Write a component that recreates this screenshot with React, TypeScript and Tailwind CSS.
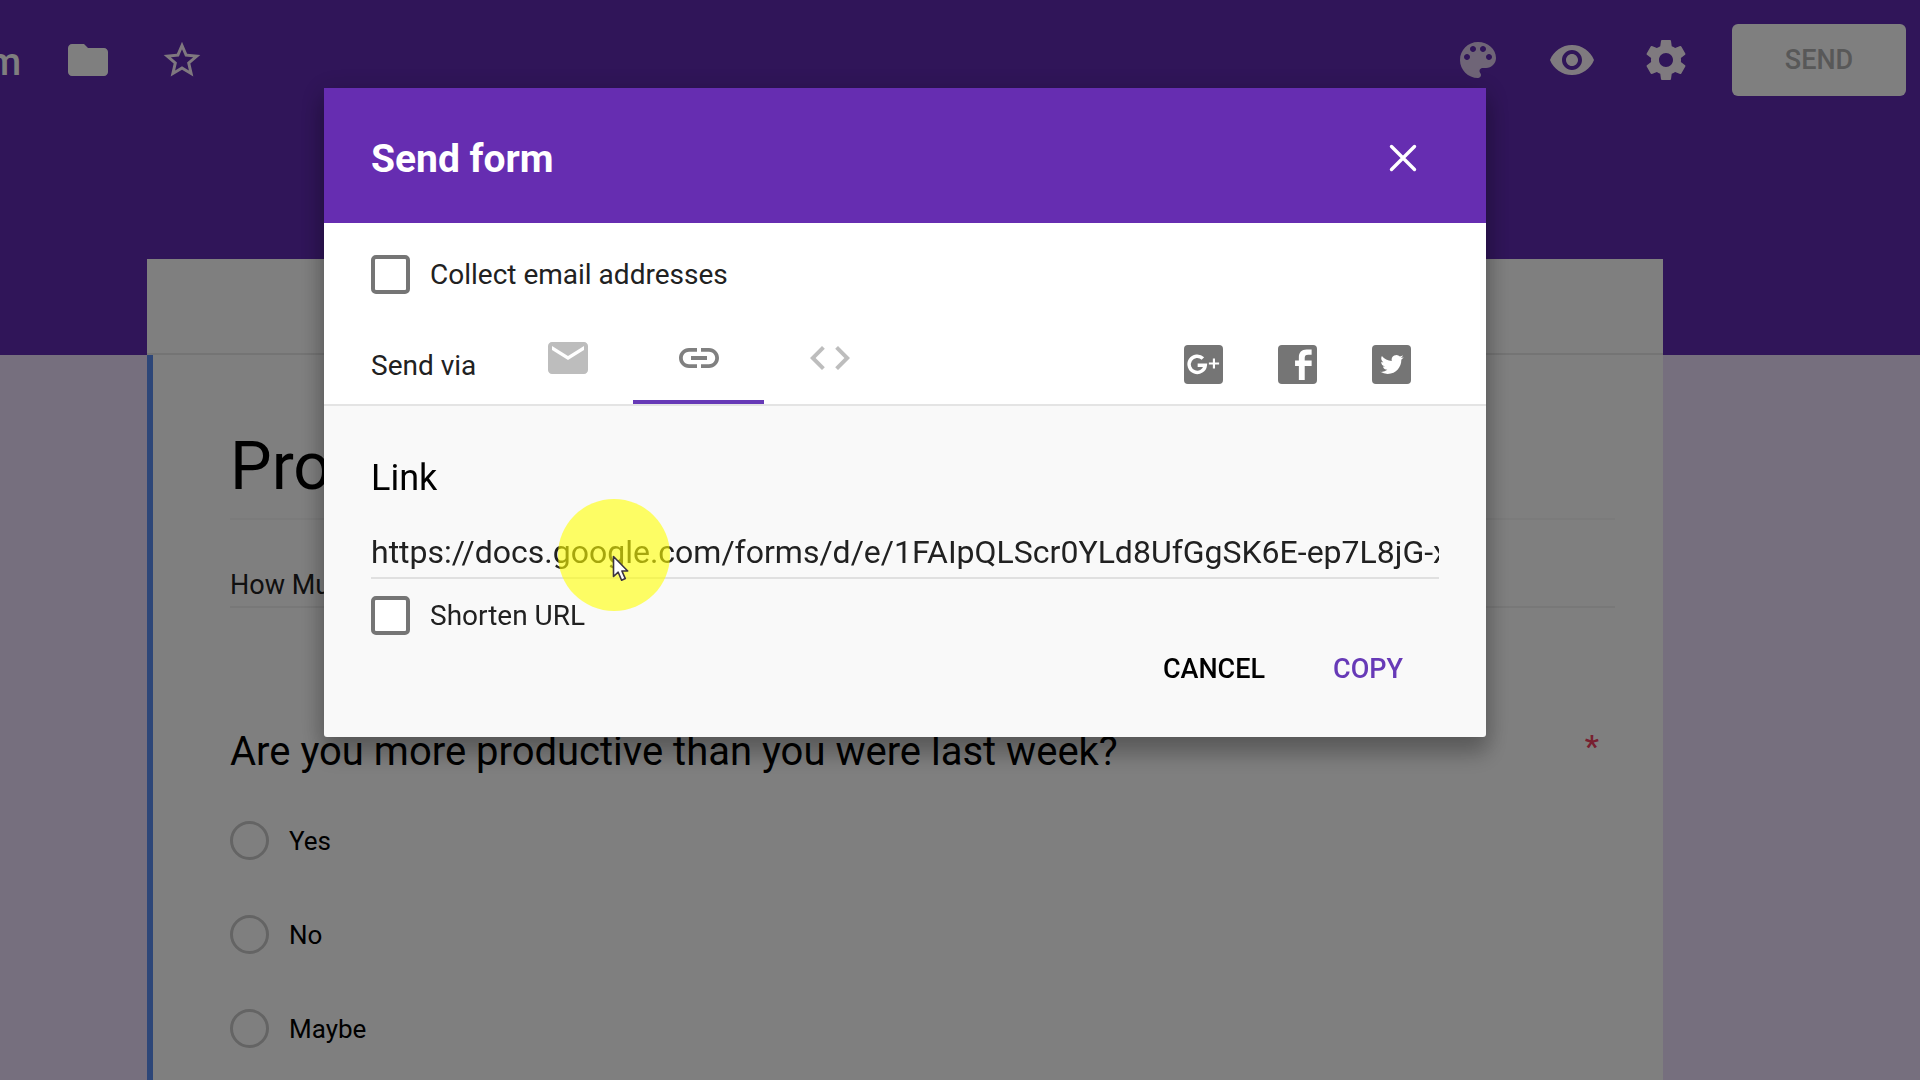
import React from "react";
import {
  MdCode,
  MdFolder,
  MdLink,
  MdMail,
  MdStarBorder,
  MdVisibility,
} from "react-icons/md";

const FORM_URL =
  "https://docs.google.com/forms/d/e/1FAIpQLScr0YLd8UfGgSK6E-ep7L8jG-x";

const OPTIONS = ["Yes", "No", "Maybe"];

function PaletteIcon() {
  return (
    <svg viewBox="0 0 24 24" className="size-12 opacity-80" fill="currentColor" aria-hidden="true">
      <path d="M12 3c-4.97 0-9 4.03-9 9s4.03 9 9 9c.83 0 1.5-.67 1.5-1.5 0-.39-.15-.74-.39-1.01-.23-.26-.38-.61-.38-.99 0-.83.67-1.5 1.5-1.5H16c2.76 0 5-2.24 5-5 0-4.42-4.03-8-9-8zm-5.500 9c-.83 0-1.500-.67-1.500-1.500S5.670 9 6.500 9 8 9.670 8 10.500 7.330 12 6.500 12zm3-4C8.670 8 8 7.330 8 6.500S8.670 5 9.500 5s1.500.67 1.500 1.500S10.330 8 9.500 8zm5 0c-.83 0-1.500-.67-1.500-1.500S13.670 5 14.500 5s1.500.67 1.500 1.500S15.330 8 14.500 8zm3 4c-.83 0-1.500-.67-1.500-1.500S16.670 9 17.500 9s1.500.67 1.500 1.500-.67 1.500-1.500 1.500z" />
    </svg>
  );
}

function GearIcon() {
  return (
    <svg viewBox="0 0 24 24" className="size-12" fill="currentColor" aria-hidden="true">
      <path d="M19.43 12.98c.04-.32.07-.64.07-.98s-.03-.66-.07-.98l2.11-1.65c.19-.15.24-.42.12-.64l-2-3.46c-.12-.22-.39-.3-.61-.22l-2.49 1c-.52-.4-1.08-.73-1.69-.98l-.38-2.65C14.46 2.18 14.25 2 14 2h-4c-.25 0-.46.18-.49.42l-.38 2.65c-.61.25-1.17.59-1.69.98l-2.49-1c-.23-.09-.49 0-.61.22l-2 3.46c-.13.22-.07.49.12.64l2.11 1.65c-.04.32-.07.65-.07.98s.03.66.07.98l-2.11 1.65c-.19.15-.24.42-.12.64l2 3.46c.12.22.39.3.61.22l2.49-1c.52.4 1.08.73 1.69.98l.38 2.65c.03.24.24.42.49.42h4c.25 0 .46-.18.49-.42l.38-2.65c.61-.25 1.17-.59 1.69-.98l2.49 1c.23.09.49 0 .61-.22l2-3.46c.12-.22.07-.49-.12-.64l-2.11-1.65zM12 15.5c-1.93 0-3.5-1.57-3.5-3.5s1.57-3.5 3.5-3.5 3.5 1.57 3.5 3.5-1.57 3.5-3.5 3.5z" />
    </svg>
  );
}

function CloseIcon() {
  return (
    <svg viewBox="0 0 28 28" className="size-7" fill="none" stroke="currentColor" strokeWidth="3.4" strokeLinecap="round" aria-hidden="true">
      <path d="M2.5 2.5l23 23M25.5 2.5l-23 23" />
    </svg>
  );
}

function GooglePlusIcon() {
  return (
    <svg viewBox="0 0 40 40" className="size-[39px]" aria-hidden="true">
      <rect width="40" height="40" rx="4" fill="#757575" />
      <path d="M19.4 13.9a8.3 8.3 0 1 0 2.4 6.8H14" fill="none" stroke="#fff" strokeWidth="3.6" />
      <path d="M25.5 19h10.5M30.7 13.8v10.4" fill="none" stroke="#fff" strokeWidth="2.2" />
    </svg>
  );
}

function FacebookIcon() {
  return (
    <svg viewBox="0 0 40 40" className="size-[39px]" aria-hidden="true">
      <rect width="40" height="40" rx="4" fill="#757575" />
      <path d="M34.5 4.5V10H31c-2.800 0-3.600 1.200-3.600 3.400V16h7.100v5.500h-7.100V36h-6V21.500H17.500V16h3.900v-3.500c0-5 2.800-8 8-8z" fill="#fff" />
    </svg>
  );
}

function TwitterIcon() {
  return (
    <svg viewBox="0 0 40 40" className="size-[39px]" aria-hidden="true">
      <rect width="40" height="40" rx="4" fill="#757575" />
      <path
        transform="translate(8.500 8)"
        fill="#fff"
        d="M23.953 4.57a10 10 0 01-2.825.775 4.958 4.958 0 002.163-2.723c-.951.555-2.005.959-3.127 1.184a4.92 4.92 0 00-8.384 4.482C7.69 8.095 4.067 6.13 1.64 3.162a4.822 4.822 0 00-.666 2.475c0 1.71.87 3.213 2.188 4.096a4.904 4.904 0 01-2.228-.616v.06a4.923 4.923 0 003.946 4.827 4.996 4.996 0 01-2.212.085 4.936 4.936 0 004.604 3.417 9.867 9.867 0 01-6.102 2.105c-.39 0-.779-.023-1.17-.067a13.995 13.995 0 007.557 2.209c9.053 0 13.998-7.496 13.998-13.985 0-.21 0-.42-.015-.63A9.935 9.935 0 0024 4.59z"
      />
    </svg>
  );
}

/* Yellow click highlight with the mouse pointer at its centre. */
function PointerHighlight() {
  return (
    <div className="pointer-events-none absolute -top-6 left-[187px] size-28">
      <div className="size-28 rounded-full bg-[#ffff00]/60" />
      <svg viewBox="0 0 20 28" className="absolute top-14 left-[54px] h-7 w-5" aria-hidden="true">
        <path d="M1.500 1.500v20l4.700-4.300 3.400 8 3.700-1.600-3.400-7.600h5.800z" fill="#fff" stroke="#3c3440" strokeWidth="1.600" strokeLinejoin="round" />
      </svg>
    </div>
  );
}

function CheckRow({ id, label }: { id: string; label: string }) {
  return (
    <div className="flex h-10 items-center gap-5">
      <input
        id={id}
        type="checkbox"
        className="size-[39px] shrink-0 appearance-none rounded-[5px] border-4 border-[#757575] bg-white checked:bg-[#673ab7]"
      />
      <label htmlFor={id} className="pt-0.5 text-[28px] leading-10 text-[#212121]">
        {label}
      </label>
    </div>
  );
}

function TopBar() {
  return (
    <header className="flex h-[120px] items-center justify-between pr-3.5">
      <div className="flex items-center">
        <span className="-ml-3 pt-1 text-[38px] leading-12 font-medium">m</span>
        <button type="button" aria-label="Move to folder" className="ml-[43px]">
          <MdFolder className="size-12" />
        </button>
        <button type="button" aria-label="Star" className="ml-12">
          <MdStarBorder className="size-11 text-[#fff0ff]" />
        </button>
      </div>
      <div className="flex items-center gap-[46px] text-[#fff4ff]">
        <button type="button" aria-label="Color palette">
          <PaletteIcon />
        </button>
        <button type="button" aria-label="Preview">
          <MdVisibility className="size-12" />
        </button>
        <button type="button" aria-label="Settings">
          <GearIcon />
        </button>
        <button
          type="button"
          className="-ml-1 h-[72px] w-[174px] rounded-md bg-white text-[27px] font-medium text-[#b0b0b0]"
        >
          SEND
        </button>
      </div>
    </header>
  );
}

function FormCard() {
  return (
    <main className="flex flex-1 pr-[110px]">
      <section className="mx-auto w-full max-w-[1516px] border-l-6 border-[#5a8cf0] bg-white pr-12 pl-[77px]">
        <input
          aria-label="Form title"
          defaultValue="Pro"
          className="mt-15 block h-[105px] w-full border-b-2 border-[#f6f6f6] text-[66px] text-black outline-none"
        />
        <input
          aria-label="Form description"
          defaultValue="How Mu"
          className="mt-10 block h-12 w-full border-b-2 border-[#f0f0f0] pt-1 text-[27px] text-[#212121] outline-none"
        />
        <fieldset className="mt-[118px]">
          <div className="flex justify-between pr-4">
            <legend className="text-[40px] leading-[52px] text-black">
              Are you more productive than you were last week?
            </legend>
            <span className="text-[32px] leading-10 font-medium text-[#f04060]">*</span>
          </div>
          <div className="mt-[42px] flex flex-col gap-[54px]">
            {OPTIONS.map((option) => (
              <div key={option} className="flex h-10 items-center gap-5">
                <input
                  id={option}
                  type="radio"
                  name="answer"
                  className="size-[39px] shrink-0 appearance-none rounded-full border-3 border-[#c8c8c8]"
                />
                <label htmlFor={option} className="pt-0.5 text-[26px] leading-10 text-black">
                  {option}
                </label>
              </div>
            ))}
          </div>
        </fieldset>
      </section>
    </main>
  );
}

function SendDialog() {
  return (
    <div className="fixed inset-0 flex items-start justify-center bg-black/50 pt-22 pr-[110px]">
      <div
        role="dialog"
        aria-labelledby="dialog-title"
        className="w-full max-w-[1162px] rounded-[3px] bg-[#f9f9f9] shadow-[0_16px_22px_2px_rgba(0,0,0,0.22),0_4px_24px_4px_rgba(0,0,0,0.14)]"
      >
        <div className="flex h-[135px] items-center justify-between bg-[#662db1] pr-[69px] pl-[47px] text-white">
          <h2 id="dialog-title" className="pt-1.5 text-[39px] leading-12 font-bold">
            Send form
          </h2>
          <button type="button" aria-label="Close" className="pt-1">
            <CloseIcon />
          </button>
        </div>

        <div className="border-b-2 border-[#e4e4e4] bg-white pt-[31px] pl-[47px]">
          <CheckRow id="collect" label="Collect email addresses" />
          <div className="mt-7 flex h-[82px] items-stretch justify-between pr-[75px]">
            <div className="flex">
              <span className="w-[131px] pt-6 text-[28px] leading-10 text-[#212121]">Send via</span>
              <div role="tablist" className="flex">
                <button type="button" role="tab" aria-label="Email" className="flex w-[131px] justify-center pt-3 text-[#bdbdbd]">
                  <MdMail className="size-12" />
                </button>
                <button
                  type="button"
                  role="tab"
                  aria-label="Link"
                  aria-selected="true"
                  className="flex w-[131px] justify-center border-b-4 border-[#673ab7] pt-3 text-[#808080]"
                >
                  <MdLink className="size-12" />
                </button>
                <button type="button" role="tab" aria-label="Embed" className="flex w-[131px] justify-center pt-3 text-[#bdbdbd]">
                  <MdCode className="size-12" />
                </button>
              </div>
            </div>
            <div className="flex gap-[55px] pt-[23px]">
              <a href="#google-plus" aria-label="Share on Google+">
                <GooglePlusIcon />
              </a>
              <a href="#facebook" aria-label="Share on Facebook">
                <FacebookIcon />
              </a>
              <a href="#twitter" aria-label="Share on Twitter">
                <TwitterIcon />
              </a>
            </div>
          </div>
        </div>

        <div className="pt-12 pr-[47px] pb-[38px] pl-[47px]">
          <label htmlFor="form-link" className="block text-[36px] leading-12 text-black">
            Link
          </label>
          <div className="relative mt-[21px]">
            <input
              id="form-link"
              type="text"
              readOnly
              value={FORM_URL}
              className="block h-14 w-full border-b-2 border-[#e0e0e0] pt-1 text-[32px] text-[#212121] outline-none"
            />
            <PointerHighlight />
          </div>
          <div className="mt-4">
            <CheckRow id="shorten" label="Shorten URL" />
          </div>
          <div className="mt-1 flex justify-end gap-2 pr-1.5 text-[27px] font-medium">
            <button type="button" className="h-15 px-[30px] text-black">
              CANCEL
            </button>
            <button type="button" className="h-15 px-[30px] text-[#673ab7]">
              COPY
            </button>
          </div>
        </div>
      </div>
    </div>
  );
}

export default function App() {
  return (
    <div className="flex h-screen flex-col overflow-hidden bg-[#ecdffc] font-['Roboto',sans-serif]">
      <div className="shrink-0 bg-[#602ab2] text-white">
        <TopBar />
        <div className="pt-[139px] pr-[110px]">
          <div className="mx-auto h-24 w-full max-w-[1516px] border-b-2 border-[#e8e8e8] bg-white" />
        </div>
      </div>
      <FormCard />
      <SendDialog />
    </div>
  );
}
